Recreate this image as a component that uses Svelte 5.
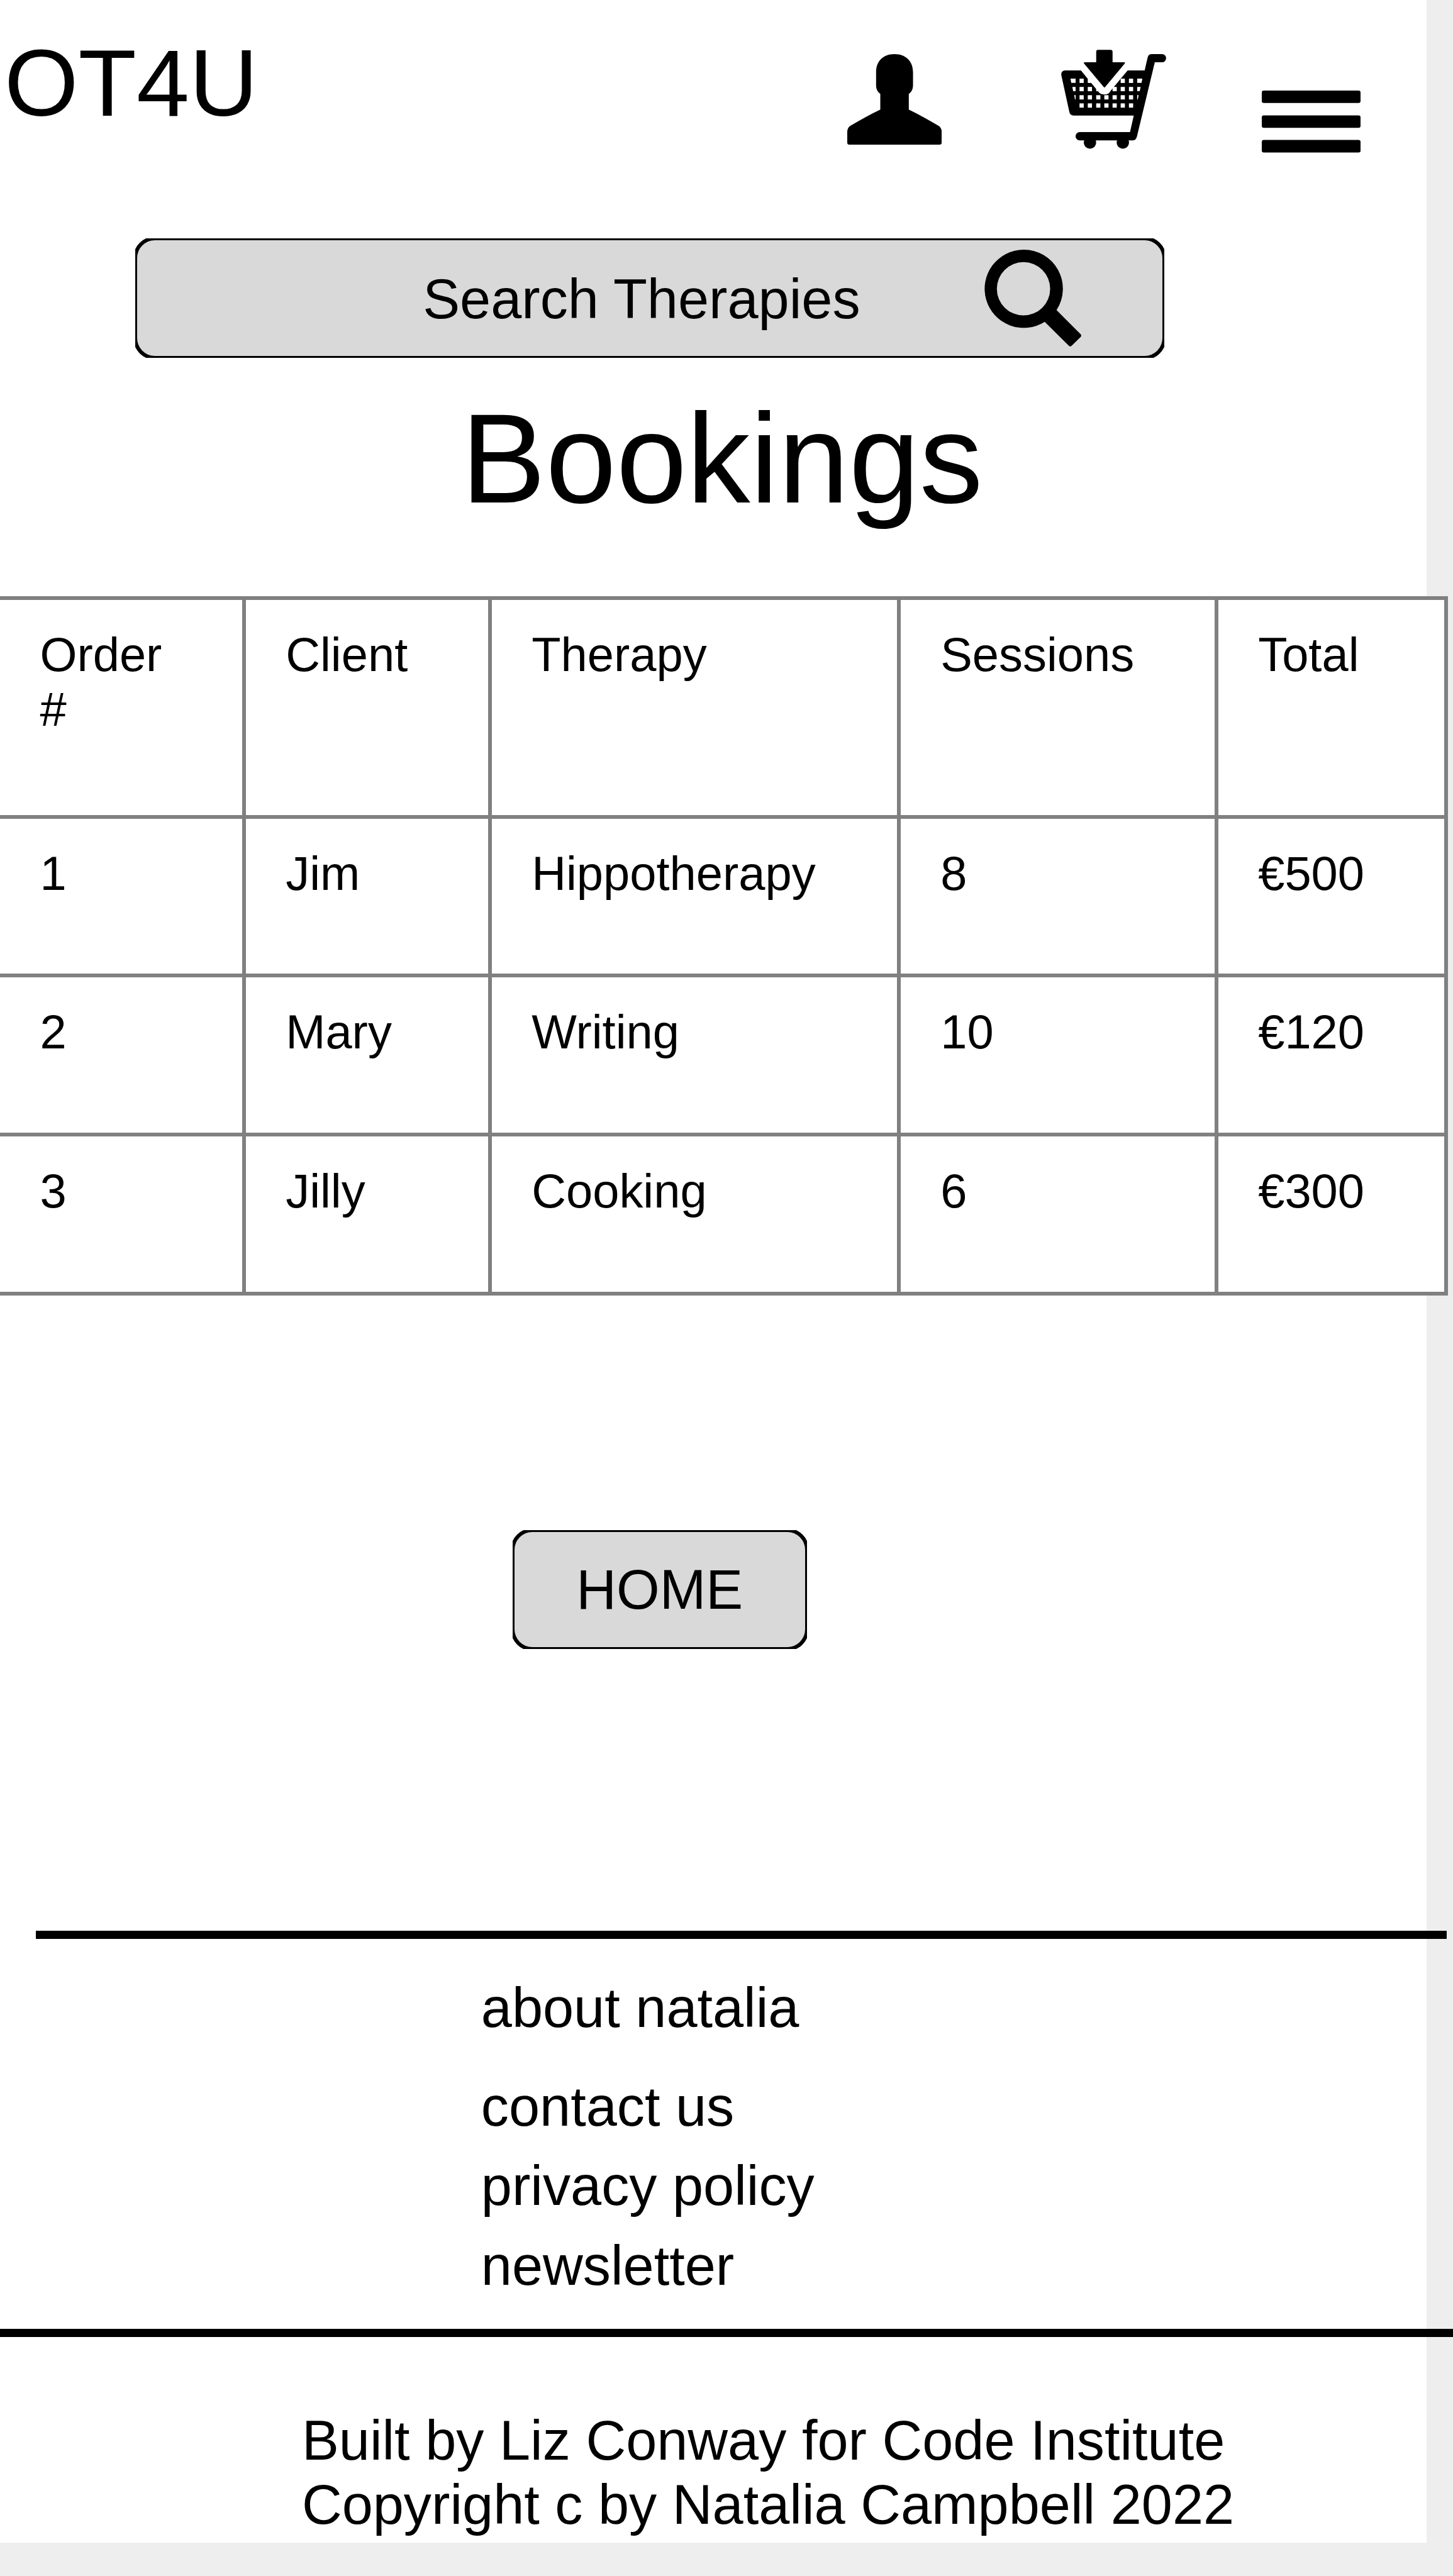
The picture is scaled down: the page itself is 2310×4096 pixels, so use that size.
<script>
  const columns = ['Order #', 'Client', 'Therapy', 'Sessions', 'Total'];
  const bookings = [
    ['1', 'Jim', 'Hippotherapy', '8', '€500'],
    ['2', 'Mary', 'Writing', '10', '€120'],
    ['3', 'Jilly', 'Cooking', '6', '€300'],
  ];
  const links = ['about natalia', 'contact us', 'privacy policy', 'newsletter'];

  // Openings of the cart's mesh: x positions for each row
  const mesh = [
    { y: 236, xs: [208, 261, 472, 525] },
    { y: 289, xs: [208, 261, 315, 420, 472, 525] },
    { y: 342, xs: [208, 261, 315, 367, 420, 472, 525] },
    { y: 394.5, xs: [208, 261, 315, 367, 420, 472, 525] },
  ];
</script>

<div class="page">
  <header>
    <div class="brand">OT4U</div>
    <svg class="user" viewBox="96 78 606 581" aria-label="Account">
      <path d="M399 78C470 78 518 122 518 195V280Q518 315 491 333V434C560 466 622 504 682 538Q702 551 702 578V646Q702 659 689 659H109Q96 659 96 646V578Q96 551 116 538C176 504 238 466 308 434V333Q281 315 281 280V195C281 122 328 78 399 78Z" />
    </svg>
    <svg class="cart" viewBox="90 50 674 636" aria-label="Cart">
      <path d="M116 183H217L324 313Q340 338 368 338T408 313L517 183H626L645 100Q650 78 672 78H737A26 26 0 0 1 737 131H691L577 605Q571 632 550 632H523A39.5 39.5 0 1 1 449 632H312A39.5 39.5 0 1 1 238 632H209A26 26 0 0 1 209 579H532L556 473H170Q148 473 143 451L91 212Q90 183 116 183Z" />
      <g class="holes">
        {#each mesh as row}
          {#each row.xs as x}
            <rect {x} y={row.y} width="27" height="27.5" />
          {/each}
        {/each}
        <path d="M150 236H183V263H155ZM162 289H183V316H167ZM174 342H183V369H179ZM578 236H611L606 263H578ZM578 289H600L594 316H578ZM578 342H587L582 369H578Z" />
      </g>
      <path d="M327 51H407Q420 51 420 64V131H496Q502 133 498 139L372 290Q368 295 364 290L237 139Q233 131 241 131H315V64Q315 51 327 51Z" />
    </svg>
    <svg class="menu" viewBox="118 132 634 397" aria-label="Menu">
      <rect x="118" y="132" width="634" height="80" rx="13" />
      <rect x="118" y="291" width="634" height="80" rx="13" />
      <rect x="118" y="449" width="634" height="80" rx="13" />
    </svg>
  </header>

  <div class="box search">
    <span>Search Therapies</span>
    <svg viewBox="139 132 622 622" aria-label="Search">
      <path fill-rule="evenodd" d="M390 132A251 251 0 0 1 602 520L757 675Q764 684 757 692L699 749Q690 756 681 749L526 595A251 251 0 1 1 390 132ZM390 212A171 171 0 1 0 390 554A171 171 0 1 0 390 212Z" />
    </svg>
  </div>

  <h1>Bookings</h1>

  <div class="table" role="table">
    {#each columns as name}
      <div class="cell" role="columnheader">{name}</div>
    {/each}
    {#each bookings as row}
      {#each row as value}
        <div class="cell" role="cell">{value}</div>
      {/each}
    {/each}
  </div>

  <div class="box home"><span>HOME</span></div>

  <footer>
    <nav>
      {#each links as link}
        <a href="#top">{link}</a>
      {/each}
    </nav>
    <p>Built by Liz Conway for Code Institute<br />Copyright c by Natalia Campbell 2022</p>
  </footer>
</div>

<style>
  :global(body) {
    margin: 0;
    background: #eee;
    overflow: hidden;
  }
  .page {
    width: 2268.4px;
    height: 4043.2px;
    background: #fff;
    color: #000;
    font-family: 'Liberation Sans', Arial, sans-serif;
    font-size: 88.3px;
    line-height: 102.1px;
    white-space: nowrap;
    display: flex;
    flex-direction: column;
    align-items: flex-start;
  }
  svg {
    display: block;
    flex: none;
  }
  header {
    height: 379px;
    display: flex;
    align-items: flex-start;
    flex: none;
  }
  .brand {
    width: 1339.8px;
    padding: 45px 0 0 7px;
    box-sizing: border-box;
    font-size: 151.2px;
    line-height: 174.7px;
  }
  .user {
    width: 150.1px;
    height: 143.9px;
    margin: 86.2px 0 0 7px;
  }
  .cart {
    width: 167px;
    height: 157.6px;
    margin: 79.3px 0 0 190.3px;
  }
  .menu {
    width: 157.1px;
    height: 98.4px;
    margin: 144.2px 0 0 152.1px;
  }
  .holes {
    fill: #fff;
  }

  /* The outline is centred on the box's edge and its outer half is cut off */
  .box {
    position: relative;
    overflow: hidden;
    box-sizing: border-box;
    height: 189.5px;
    flex: none;
    display: flex;
    align-items: flex-start;
  }
  .box::before {
    content: '';
    position: absolute;
    inset: -3px;
    border: 6px solid #000;
    border-radius: 34.5px;
    background: #d9d9d9;
  }
  .box > * {
    position: relative;
  }
  .search {
    width: 1636.8px;
    margin-left: 214.6px;
    padding: 0 0 0 457.6px;
  }
  .search span {
    width: 893.3px;
    padding-top: 45.9px;
  }
  .search svg {
    width: 154.1px;
    height: 154.1px;
    margin-top: 17.9px;
  }

  h1 {
    margin: 44.6px 0 102px 733px;
    font-size: 201.7px;
    line-height: 232.9px;
    font-weight: 400;
    height: 232.9px;
    flex: none;
  }

  .table {
    width: 2302px;
    box-sizing: border-box;
    flex: none;
    display: grid;
    grid-template-columns: 385px 391px 650px 505px 365px;
    grid-template-rows: 348px 252px 253px 253px;
    border: solid #808080;
    border-width: 0 6px 6px 0;
    background: #fff;
    font-size: 75.9px;
    line-height: 87.3px;
  }
  .cell {
    border: solid #808080;
    border-width: 6px 0 0 6px;
    padding: 43px 0 0 63.2px;
    white-space: normal;
  }
  .cell:nth-child(5n + 1) {
    border-left: 0;
    padding: 43px 100px 0 63.4px;
  }

  .home {
    width: 467.6px;
    margin: 372.7px 0 0 815.3px;
    padding: 44px 0 0 100.9px;
  }

  footer {
    margin-top: 448.2px;
    flex: none;
  }
  nav {
    width: 2242.4px;
    height: 632.2px;
    margin-left: 57.2px;
    padding: 58.4px 0 0 707.6px;
    border-top: 13px solid #000;
    box-sizing: border-box;
    display: flex;
    flex-direction: column;
  }
  a {
    color: inherit;
    text-decoration: none;
    height: 126.3px;
  }
  a:first-child {
    height: 157.4px;
  }
  p {
    width: 2310px;
    margin: 0;
    border-top: 13px solid #000;
    box-sizing: border-box;
    padding: 114px 0 0 479.9px;
  }
</style>
